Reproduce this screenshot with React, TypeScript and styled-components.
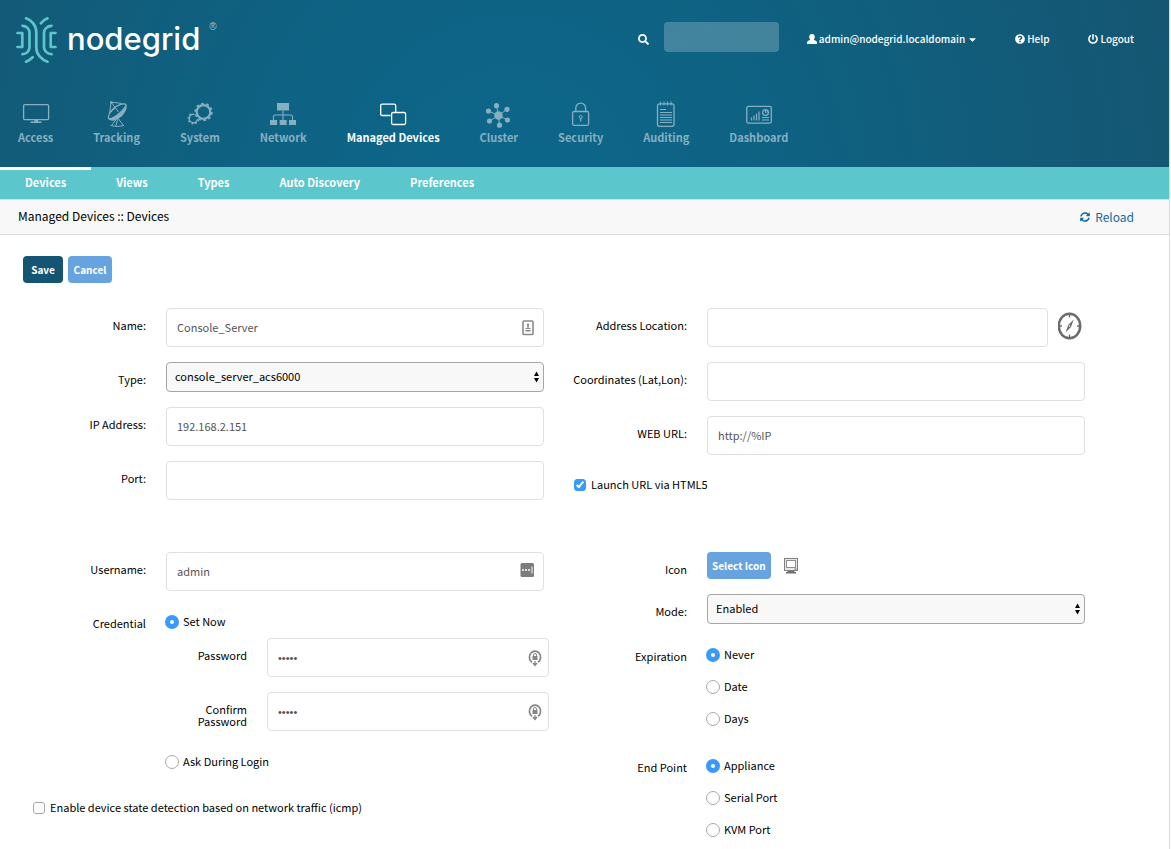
import React from 'react';
import styled, { createGlobalStyle } from 'styled-components';
import { FaSearch, FaQuestionCircle, FaPowerOff, FaSyncAlt, FaCaretDown } from 'react-icons/fa';

const GlobalStyle = createGlobalStyle`
  *, *::before, *::after { box-sizing: border-box; }
  body {
    margin: 0;
    background: #fff;
    color: #000;
    font-family: "Noto Sans CJK SC", "Noto Sans", sans-serif;
    font-size: 11px;
    line-height: 12px;
  }
  button, input, select { font: inherit; margin: 0; }
  a { color: inherit; text-decoration: none; }
  svg { display: block; flex: none; }
`;

/* ---------- page frame ---------- */

const Page = styled.div`
  min-height: 100vh;
  margin-right: 1px;
  border-right: 1px solid #dcdcdc;
`;

const Header = styled.header`
  background: radial-gradient(circle at 44% 190px, #0c678b 0, #0f6181 300px, #155672 690px);
  padding: 13px 35px 22px 15px;
`;

const TopBar = styled.div`
  display: flex;
  align-items: center;
  justify-content: space-between;
  height: 52px;
  color: #fff;
`;

const Brand = styled.a`
  display: flex;
  align-items: center;
  gap: 9px;
`;

const BrandName = styled.span`
  font: 500 31px/36px Inter, sans-serif;
  color: #fff;
`;

const Registered = styled.sup`
  align-self: flex-start;
  margin: 7px 0 0;
  font: 10px/12px "Liberation Sans", sans-serif;
  color: #9cc3cf;
`;

const Tools = styled.div`
  display: flex;
  align-items: center;
`;

const SearchForm = styled.form`
  display: flex;
  align-items: center;
  gap: 15px;
  margin-right: 28px;
`;

const SearchInput = styled.input`
  width: 115px;
  height: 30px;
  margin-bottom: 4px;
  padding: 0 8px;
  border: 0;
  border-radius: 4px;
  background: rgba(255, 255, 255, 0.22);
  color: #fff;
`;

const ToolLink = styled.a<{ $gap?: number }>`
  display: flex;
  align-items: center;
  gap: 2px;
  font-size: 10px;
  font-weight: 500;
  margin-right: ${(p) => p.$gap ?? 0}px;
`;

const MainNav = styled.nav`
  display: flex;
  gap: 40px;
  margin: 35px 0 0 3px;
`;

const NavLink = styled.a<{ $active?: boolean }>`
  display: flex;
  flex-direction: column;
  align-items: center;
  gap: 2px;
  height: 45px;
  font-size: 11px;
  line-height: 14px;
  font-weight: 700;
  white-space: nowrap;
  color: ${(p) => (p.$active ? '#fff' : '#86b0c1')};
`;

const SubNav = styled.nav`
  display: flex;
  height: 33px;
  background: #5bc6cc;
  border-bottom: 1px solid #d8dddd;
`;

const SubLink = styled.a<{ $active?: boolean }>`
  padding: 5px 25px 0;
  border-top: 3px solid ${(p) => (p.$active ? '#fff' : 'transparent')};
  font-size: 11px;
  line-height: 14px;
  font-weight: 700;
  color: #fff;
`;

const Crumbs = styled.div`
  display: flex;
  align-items: center;
  justify-content: space-between;
  height: 35px;
  padding: 0 35px 0 18px;
  background: #f8f8f8;
  border-bottom: 1px solid #dcdcdc;
  font-size: 12px;
`;

const ReloadLink = styled.a`
  display: flex;
  align-items: center;
  gap: 5px;
  color: #126a9f;
`;

/* ---------- form ---------- */

const Actions = styled.div`
  display: flex;
  gap: 5px;
  padding: 21px 23px 25px;
`;

const Button = styled.button<{ $primary?: boolean }>`
  height: 27px;
  padding: 0 5px;
  min-width: ${(p) => (p.$primary ? 40 : 44)}px;
  border: 0;
  border-radius: 4px;
  background: ${(p) => (p.$primary ? '#135572' : '#67a4df')};
  color: #fff;
  font-size: 10px;
  font-weight: 700;
  white-space: nowrap;
`;

const Row = styled.div`
  display: grid;
  grid-template-columns: 143px minmax(0, 1fr);
  column-gap: 20px;
  margin-bottom: 15px;
`;

const Column = styled.div`
  display: flex;
  flex-direction: column;
`;

const Section = styled.div`
  display: grid;
  grid-template-columns: 1fr 1fr;
  align-items: start;
  padding: 0 84px 37px 3px;

  &:last-child {
    padding-bottom: 0;
  }
  &:last-child ${Column} > :last-child {
    margin-bottom: 0;
  }
`;

const SubRow = styled(Row)`
  grid-template-columns: 81px minmax(0, 1fr);
  margin-right: -5px;
`;

const labelText = `
  padding-top: 11px;
  text-align: right;
`;
const Label = styled.label`${labelText}`;
const Caption = styled.div`${labelText}`;

const FieldBox = styled.div`
  position: relative;
  flex: 1;
  min-width: 0;
`;

const TextInput = styled.input`
  display: block;
  width: 100%;
  height: 39px;
  padding: 0 36px 1px 10px;
  border: 1px solid #e0e0e0;
  border-radius: 4px;
  background: #fff;
  color: #555;
  line-height: 16px;

  &[type='password'] {
    padding-bottom: 0;
    font-family: "Liberation Sans", sans-serif;
  }
`;

const Dropdown = styled.select`
  appearance: none;
  display: block;
  width: 100%;
  height: 30px;
  padding: 0 24px 2px 8px;
  border: 1px solid #a6a6a6;
  border-radius: 4px;
  background: #f8f8f8;
  color: #000;
  line-height: 18px;
`;

const Adornment = styled.span`
  position: absolute;
  top: 0;
  bottom: 0;
  right: 7px;
  display: flex;
  align-items: center;
  pointer-events: none;
`;

const SelectAdornment = styled(Adornment)`
  right: 4px;
`;

const Inline = styled.div`
  display: flex;
  align-items: center;
  gap: 10px;
`;

const IconPick = styled(Inline)`
  gap: 12px;
`;

const IconButton = styled.button`
  padding: 0 3px 4px 0;
  border: 0;
  background: none;
`;

const RaisedText = styled.span`
  padding-bottom: 2px;
`;

const Choice = styled.label`
  display: flex;
  align-items: center;
  gap: 4px;
  height: 32px;
  margin-left: -1px;
`;

const CheckRow = styled.label`
  display: flex;
  align-items: center;
  gap: 5px;
  height: 30px;
  padding-left: 30px;
`;

const Radio = styled.input.attrs({ type: 'radio' })`
  appearance: none;
  width: 14px;
  height: 14px;
  border: 1px solid #aaa;
  border-radius: 50%;
  background: #fff;
  &:checked {
    border: 5px solid #3b99fc;
  }
`;

const CheckBox = styled.input.attrs({ type: 'checkbox' })`
  appearance: none;
  display: grid;
  place-items: center;
  width: 12px;
  height: 12px;
  border: 1px solid #a6a6a6;
  border-radius: 3px;
  background: #fff;
  &:checked {
    border-color: #3b99fc;
    background: #3b99fc;
  }
  &:checked::after {
    content: '';
    width: 4px;
    height: 8px;
    margin-bottom: 2px;
    border: solid #fff;
    border-width: 0 2px 2px 0;
    transform: rotate(40deg);
  }
`;

/* ---------- drawings ---------- */

const NavSvg = ({ children }: { children: React.ReactNode }) => (
  <svg width="32" height="28" viewBox="0 0 32 28" fill="none" stroke="currentColor" strokeWidth="1.3" aria-hidden="true">
    {children}
  </svg>
);

const AccessIcon = () => (
  <NavSvg>
    <rect x="3.6" y="4.6" width="25" height="15" rx="1.2" />
    <path d="M14.5 19.5h3.5v2h3.500v1.500h-11v-1.500h4z" fill="currentColor" stroke="none" />
  </NavSvg>
);

const TrackingIcon = () => (
  <NavSvg>
    <path d="M7.500 18.500C7 15 9 11.500 13 8S23 3 25 4.500C26 9 22 16 17 18.500S9.500 20.500 7.500 18.500z" strokeWidth="1.100" />
    <path d="M7.500 18.500C13 17.500 21 11.500 25 4.500 26.500 9 22 16 17 18.500S9.500 20.500 7.500 18.500z" fill="currentColor" stroke="none" />
    <path d="M10 2l7.500 10M10 2l11 1.500M10 2L8.500 14M9 13l5-5" strokeWidth="1" />
    <circle cx="10.300" cy="2.500" r="1.200" fill="currentColor" stroke="none" />
    <path d="M15 19.500L10.500 25.500M17.500 19l5 6.500M16.500 19.500l-1.500 6.500M9.500 25.500q7 2 13.500 0" strokeWidth="1" />
  </NavSvg>
);

const SystemIcon = () => (
  <NavSvg>
    <circle cx="19.500" cy="12" r="6.800" strokeWidth="2.200" />
    <circle cx="19.500" cy="12" r="8.400" strokeWidth="1.600" strokeDasharray="2.700 2.578" />
    <circle cx="9.500" cy="18.500" r="4.200" strokeWidth="1.400" strokeDasharray="19.500 6.900" transform="rotate(10 9.500 18.500)" />
    <circle cx="9.500" cy="18.500" r="5.300" strokeWidth="1.400" strokeDasharray="1.800 2 1.800 2 1.800 2 1.800 2 1.800 2 1.800 14" transform="rotate(10 9.500 18.500)" />
  </NavSvg>
);

const NetworkIcon = () => (
  <NavSvg>
    <path d="M10 3h12v7.500H10zM3 20h7v5H3zM12.700 20h7v5h-7zM22 20h7v5h-7z" fill="currentColor" stroke="none" />
    <path d="M16 10.500V20M6.500 20v-3.500q0-1.500 1.500-1.500h16q1.500 0 1.500 1.500V20" strokeWidth="1.100" />
  </NavSvg>
);

const DevicesIcon = () => (
  <NavSvg>
    <path d="M13.500 15.500H5.200q-1.500 0-1.500-1.500V5.700q0-1.500 1.500-1.500h12q1.500 0 1.500 1.500V12" />
    <rect x="14.600" y="12.500" width="14" height="12" rx="1.500" />
  </NavSvg>
);

const ClusterIcon = () => (
  <NavSvg>
    <g fill="currentColor" stroke="none">
      <circle cx="15.500" cy="15.500" r="4.200" />
      <circle cx="13.500" cy="5.700" r="2.600" />
      <circle cx="24" cy="9.300" r="2.600" />
      <circle cx="24.500" cy="20" r="2.600" />
      <circle cx="16.500" cy="25.200" r="2.600" />
      <circle cx="6.500" cy="21" r="2.600" />
      <circle cx="5.500" cy="11" r="2.600" />
    </g>
    <path d="M13.500 5.700l2 9.800 8.500-6.200M24.500 20l-9-4.500 1 9.700M6.500 21l9-5.500-10-4.500" strokeWidth="1" />
  </NavSvg>
);

const SecurityIcon = () => (
  <NavSvg>
    <rect x="7.600" y="11.500" width="16" height="13.800" rx="1.500" />
    <path d="M10.800 11.500V8a4.900 4.900 0 0 1 9.800 0v3.500" />
    <circle cx="15.700" cy="17" r="1.500" strokeWidth="1" />
    <path d="M15.700 18.500v3" />
  </NavSvg>
);

const AuditingIcon = () => (
  <NavSvg>
    <rect x="7.500" y="3.800" width="16.500" height="22.500" rx="2" />
    <path d="M10.500 1.500v4M14 1.500v4M17.500 1.500v4M21 1.500v4M10 9.500h6M10 12.500h12M10 15h12M10 17.500h12M10 20h12M10 22.500h12" strokeWidth="1" />
  </NavSvg>
);

const DashboardIcon = () => (
  <NavSvg>
    <rect x="3.800" y="6.300" width="24.500" height="16.800" rx="1.500" />
    <path d="M8.500 20.500v-3M11 20.500v-5M13.500 20.500v-7M16 20.500v-9M19 17.500h7M19 20h7" strokeWidth="1.200" />
    <circle cx="22.500" cy="12.500" r="2.900" />
    <path d="M22.500 9.500v3l2.500-1" strokeWidth="1" />
  </NavSvg>
);

const LogoMark = () => (
  <svg width="43" height="50" viewBox="0 -1 43 50" fill="none" stroke="#5bc6cc" strokeWidth="2.700" strokeLinecap="round" aria-hidden="true">
    <path d="M2.500 18h4.800v14H2.500" strokeLinejoin="round" />
    <path d="M7.500 10.800c4 0 7 3.200 7 7v14.400c0 3.800-3 7-7 7" />
    <path d="M11 3.300c5 1.500 10.300 6.500 10.300 14v15.400c0 7 5.700 12 11.200 14" />
    <path d="M36.500 10.800c-4 0-7.500 3.200-7.500 7v14.400c0 3.800 3.500 7 7.500 7" />
    <path d="M40.500 18h-4.800v14h4.800" strokeLinejoin="round" />
    <path d="M25.800 8.300q3-3.500 6.700-5M17.700 42.200q-3 3-6.700 4.500" />
  </svg>
);

const UserIcon = () => (
  <svg width="10" height="10" viewBox="0 0 10 10" fill="currentColor" aria-hidden="true">
    <path d="M5 0c1.700 0 2.800 1.200 2.800 2.800 0 1.200-.4 2.200-1.100 2.900L9.200 6.900q.8.500.8 1.500V10H0V8.400q0-1 .8-1.500l2.500-1.200C2.600 5 2.200 4 2.200 2.800 2.200 1.200 3.300 0 5 0z" />
  </svg>
);

const UpDownIcon = () => (
  <svg width="7" height="12" viewBox="0 0 7 12" aria-hidden="true">
    <path d="M3.500 0.500L6 5H1zM3.500 11.500L1 7h5z" />
  </svg>
);

const ContactIcon = () => (
  <svg width="18" height="16" viewBox="0 0 18 16" fill="none" aria-hidden="true">
    <rect x="4" y="1" width="10" height="13.500" rx="1" stroke="#8a8a8a" strokeWidth="1.600" />
    <path d="M9 3.500a1.300 1.300 0 0 1 .7 2.400V8h1.800v1H6.500V8h1.800V5.900A1.300 1.300 0 0 1 9 3.500zM6.500 10h5v1.500h-5z" fill="#8a8a8a" />
  </svg>
);

const PassManagerIcon = () => (
  <svg width="18" height="18" viewBox="0 0 18 18" aria-hidden="true">
    <rect x="1.500" y="0" width="13.500" height="14" rx="1.500" fill="#7d7d7d" />
    <g fill="#fff">
      <circle cx="4" cy="7" r="1" />
      <circle cx="7" cy="7" r="1" />
      <circle cx="10" cy="7" r="1" />
      <path d="M12.500 3.500h1v7h-1z" />
    </g>
  </svg>
);

const KeyIcon = () => (
  <svg width="14" height="18" viewBox="0 0 14 18" fill="none" stroke="#858585" aria-hidden="true">
    <path d="M4 13.200A5.600 6 0 1 1 10 13.200" strokeWidth="1.700" />
    <path d="M7 12v4M5 14l2 2.500L9 14" strokeWidth="1.300" />
    <rect x="4.500" y="7" width="5" height="4" fill="#858585" stroke="none" />
    <path d="M5.500 7.500V6a1.500 1.500 0 0 1 3 0v1.500" />
  </svg>
);

const CompassIcon = () => (
  <svg width="24" height="28" viewBox="0 0 24 28" fill="none" stroke="#6b6b6b" aria-hidden="true">
    <ellipse cx="11.500" cy="14" rx="10.700" ry="12.300" strokeWidth="2.500" />
    <path d="M11.500 2.500v3M11.500 22.500v3M1.500 14H4M19 14h2.500" strokeWidth="1.300" />
    <path d="M15.800 7.500L13 15 7.500 20.500 10.200 13z" fill="#6b6b6b" stroke="none" />
    <circle cx="11.500" cy="14" r=".8" fill="#fff" stroke="none" />
  </svg>
);

const ScreenIcon = () => (
  <svg width="16" height="17" viewBox="0 0 16 17" fill="none" aria-hidden="true">
    <rect x="1.500" y="1.500" width="13" height="12" fill="#e8e8e8" stroke="#808080" />
    <rect x="3.500" y="3.500" width="9" height="7" fill="#fff" stroke="#8f8f8f" />
    <path d="M4.500 14h7v1h1.500v1.500H3V15h1.500z" fill="#6f6f6f" />
    <path d="M11.500 12h2" stroke="#555" />
  </svg>
);

/* ---------- composed parts ---------- */

type TextFieldProps = { id: string; value?: string; type?: string; icon?: React.ReactNode };
const TextField = ({ id, value = '', type = 'text', icon }: TextFieldProps) => (
  <FieldBox>
    <TextInput id={id} type={type} defaultValue={value} />
    {icon && <Adornment>{icon}</Adornment>}
  </FieldBox>
);

const SelectField = ({ id, options }: { id: string; options: string[] }) => (
  <FieldBox>
    <Dropdown id={id}>
      {options.map((o) => <option key={o}>{o}</option>)}
    </Dropdown>
    <SelectAdornment><UpDownIcon /></SelectAdornment>
  </FieldBox>
);

type RadioChoiceProps = { name: string; text: string; checked?: boolean };
const RadioChoice = ({ name, text, checked }: RadioChoiceProps) => (
  <Choice>
    <Radio name={name} defaultChecked={checked} />
    <RaisedText>{text}</RaisedText>
  </Choice>
);

const RadioRow = ({ label, options }: { label: string; options: string[] }) => (
  <Row role="radiogroup" aria-label={label}>
    <Caption>{label}</Caption>
    <div>
      {options.map((o, i) => <RadioChoice key={o} name={label} text={o} checked={i === 0} />)}
    </div>
  </Row>
);

const navItems = [
  { label: 'Access', icon: <AccessIcon /> },
  { label: 'Tracking', icon: <TrackingIcon /> },
  { label: 'System', icon: <SystemIcon /> },
  { label: 'Network', icon: <NetworkIcon /> },
  { label: 'Managed Devices', icon: <DevicesIcon />, active: true },
  { label: 'Cluster', icon: <ClusterIcon /> },
  { label: 'Security', icon: <SecurityIcon /> },
  { label: 'Auditing', icon: <AuditingIcon /> },
  { label: 'Dashboard', icon: <DashboardIcon /> },
];

const subItems = ['Devices', 'Views', 'Types', 'Auto Discovery', 'Preferences'];

export default function App() {
  return (
    <Page>
      <GlobalStyle />
      <Header>
        <TopBar>
          <Brand href="#">
            <LogoMark />
            <BrandName>nodegrid</BrandName>
            <Registered>®</Registered>
          </Brand>
          <Tools>
            <SearchForm role="search">
              <FaSearch size={11} />
              <SearchInput type="search" aria-label="Search" />
            </SearchForm>
            <ToolLink href="#" $gap={37}>
              <UserIcon />
              admin@nodegrid.localdomain
              <FaCaretDown size={11} />
            </ToolLink>
            <ToolLink href="#" $gap={39}>
              <FaQuestionCircle size={10} />
              Help
            </ToolLink>
            <ToolLink href="#">
              <FaPowerOff size={10} />
              Logout
            </ToolLink>
          </Tools>
        </TopBar>
        <MainNav>
          {navItems.map((n) => (
            <NavLink key={n.label} href="#" $active={n.active}>
              {n.icon}
              {n.label}
            </NavLink>
          ))}
        </MainNav>
      </Header>
      <SubNav>
        {subItems.map((s, i) => <SubLink key={s} href="#" $active={i === 0}>{s}</SubLink>)}
      </SubNav>
      <Crumbs>
        <RaisedText>Managed Devices :: Devices</RaisedText>
        <ReloadLink href="#">
          <FaSyncAlt size={10} />
          Reload
        </ReloadLink>
      </Crumbs>

      <main>
        <Actions>
          <Button type="button" $primary>Save</Button>
          <Button type="button">Cancel</Button>
        </Actions>

        <Section>
          <Column>
            <Row>
              <Label htmlFor="name">Name:</Label>
              <TextField id="name" value="Console_Server" icon={<ContactIcon />} />
            </Row>
            <Row>
              <Label htmlFor="type">Type:</Label>
              <SelectField id="type" options={['console_server_acs6000']} />
            </Row>
            <Row>
              <Label htmlFor="ip">IP Address:</Label>
              <TextField id="ip" value="192.168.2.151" />
            </Row>
            <Row>
              <Label htmlFor="port">Port:</Label>
              <TextField id="port" />
            </Row>
          </Column>
          <Column>
            <Row>
              <Label htmlFor="address">Address Location:</Label>
              <Inline>
                <TextField id="address" />
                <IconButton type="button" aria-label="Locate"><CompassIcon /></IconButton>
              </Inline>
            </Row>
            <Row>
              <Label htmlFor="coords">Coordinates (Lat,Lon):</Label>
              <TextField id="coords" />
            </Row>
            <Row>
              <Label htmlFor="url">WEB URL:</Label>
              <TextField id="url" value="http://%IP" />
            </Row>
            <CheckRow>
              <CheckBox defaultChecked />
              <RaisedText>Launch URL via HTML5</RaisedText>
            </CheckRow>
          </Column>
        </Section>

        <Section>
          <Column>
            <Row>
              <Label htmlFor="username">Username:</Label>
              <TextField id="username" value="admin" icon={<PassManagerIcon />} />
            </Row>
            <Row role="radiogroup" aria-label="Credential">
              <Caption>Credential</Caption>
              <div>
                <RadioChoice name="credential" text="Set Now" checked />
                <SubRow>
                  <Label htmlFor="password">Password</Label>
                  <TextField id="password" type="password" value="admin" icon={<KeyIcon />} />
                </SubRow>
                <SubRow>
                  <Label htmlFor="confirm">Confirm Password</Label>
                  <TextField id="confirm" type="password" value="admin" icon={<KeyIcon />} />
                </SubRow>
                <RadioChoice name="credential" text="Ask During Login" />
              </div>
            </Row>
            <CheckRow>
              <CheckBox />
              <RaisedText>Enable device state detection based on network traffic (icmp)</RaisedText>
            </CheckRow>
          </Column>
          <Column>
            <Row>
              <Caption>Icon</Caption>
              <IconPick>
                <Button type="button">Select Icon</Button>
                <ScreenIcon />
              </IconPick>
            </Row>
            <Row>
              <Label htmlFor="mode">Mode:</Label>
              <SelectField id="mode" options={['Enabled', 'Disabled', 'On-demand']} />
            </Row>
            <RadioRow label="Expiration" options={['Never', 'Date', 'Days']} />
            <RadioRow label="End Point" options={['Appliance', 'Serial Port', 'KVM Port']} />
          </Column>
        </Section>
      </main>
    </Page>
  );
}
